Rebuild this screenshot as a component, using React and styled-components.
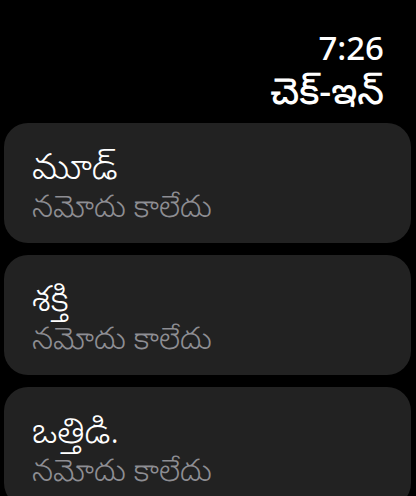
import React from "react";
import styled, { createGlobalStyle } from "styled-components";

const Global = createGlobalStyle`
  html, body { margin: 0; padding: 0; background: #000; }
  body { font-family: "Noto Sans", "Noto Sans Telugu", sans-serif; color: #fff; }
`;

const Screen = styled.div`
  width: 416px;
  height: 496px;
  overflow: hidden;
  background: #000;
  display: flex;
  flex-direction: column;
`;

const Header = styled.header`
  display: flex;
  flex-direction: column;
  align-items: flex-end;
  padding: 31px 32px 0 0;
`;

const Time = styled.div`
  font-size: 33px;
  line-height: 34px;
  font-weight: 500;
`;

const Title = styled.h1`
  margin: 6px 0 0;
  font-size: 37px;
  line-height: 38px;
  font-weight: 500;
`;

const List = styled.div`
  display: flex;
  flex-direction: column;
  gap: 12px;
  padding: 14px 5px 0 4px;
`;

const Card = styled.div`
  background: #222222;
  border-radius: 24px;
  height: 120px;
  box-sizing: border-box;
  padding: 0 28px;
  display: flex;
  flex-direction: column;
  justify-content: center;
`;

const CardTitle = styled.div`
  font-size: 36px;
  line-height: 42px;
  font-weight: 300;
  color: #fff;
`;

const CardSub = styled.div`
  font-size: 31px;
  line-height: 34px;
  font-weight: 300;
  color: #8e8e93;
  margin-top: 1px;
`;

const items = ["మూడ్", "శక్తి", "ఒత్తిడి."];

export default function App() {
  return (
    <Screen>
      <Global />
      <Header>
        <Time>7:26</Time>
        <Title>చెక్-ఇన్</Title>
      </Header>
      <List>
        {items.map((t) => (
          <Card key={t}>
            <CardTitle>{t}</CardTitle>
            <CardSub>నమోదు కాలేదు</CardSub>
          </Card>
        ))}
      </List>
    </Screen>
  );
}
